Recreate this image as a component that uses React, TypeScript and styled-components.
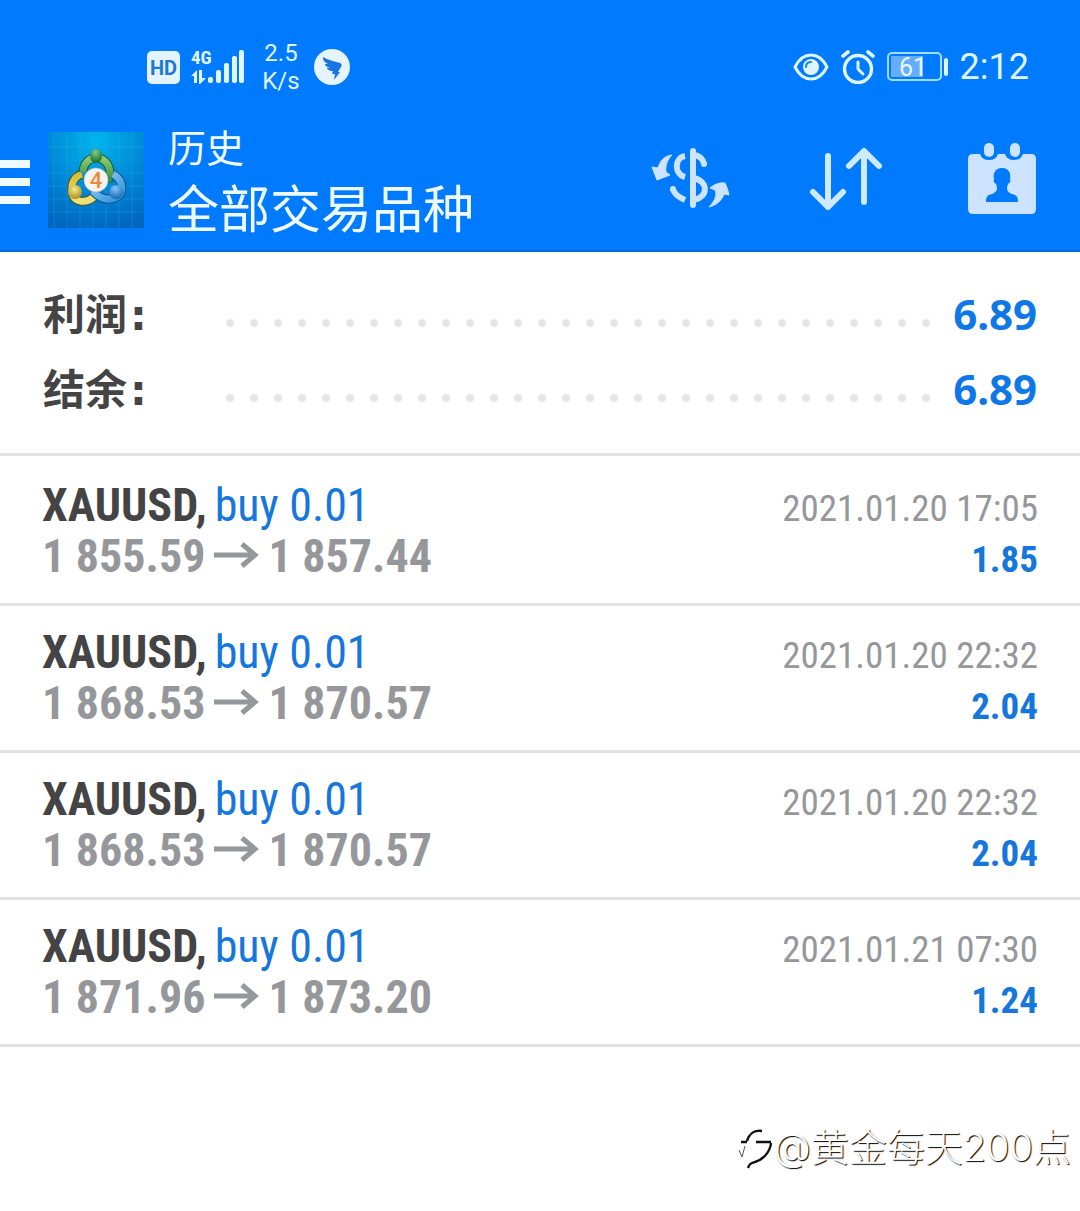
import React from "react";
import styled, { createGlobalStyle } from "styled-components";

const GlobalStyle = createGlobalStyle`
  *, *::before, *::after { box-sizing: border-box; }
  body {
    margin: 0;
    background: #ffffff;
    font-family: Roboto, "Noto Sans CJK SC", sans-serif;
  }
`;

const condensed = `"Roboto Condensed", "Noto Sans CJK SC", sans-serif`;
const ice = "#dff5ff";

const Screen = styled.div`
  min-height: 100vh;
  display: flex;
  flex-direction: column;
`;

const Header = styled.header`
  background: #007aff;
  border-bottom: 2px solid #0b6bd6;
`;

const StatusBar = styled.div`
  display: flex;
  align-items: center;
  justify-content: space-between;
  padding: 38px 51px 0 147px;
  height: 96px;
  color: ${ice};
`;

const StatusGroup = styled.div<{ $gap: number }>`
  display: flex;
  align-items: center;
  gap: ${(p) => p.$gap}px;
  svg { display: block; }
`;

const Speed = styled.div`
  width: 38px;
  margin: 0 3px 0 6px;
  font-size: 24px;
  line-height: 28px;
  text-align: center;
`;

const Clock = styled.time`
  font-size: 36px;
  line-height: 44px;
`;

const Toolbar = styled.div`
  display: flex;
  align-items: center;
  height: 154px;
  padding: 14px 43px 0 0;
`;

const IconButton = styled.button`
  display: block;
  padding: 0;
  border: 0;
  background: none;
  cursor: pointer;
  svg { display: block; }
`;

const AppLogo = styled.svg`
  display: block;
  flex: none;
  margin: 0 24px 0 18px;
`;

const Titles = styled.div`
  flex: 1;
  padding-bottom: 3px;
  color: #effaff;
  font-family: "Noto Sans CJK SC", sans-serif;
  font-weight: 400;
`;

const Caption = styled.div`
  font-size: 38px;
  line-height: 54px;
`;

const Title = styled.h1`
  margin: 0;
  font-size: 51px;
  font-weight: 400;
  line-height: 66px;
`;

const Actions = styled.div`
  display: flex;
  align-items: center;
  gap: 78px;
`;

const Summary = styled.dl`
  margin: 0;
  padding: 24px 43px 27px;
  border-bottom: 3px solid #e3e3e3;
`;

const SummaryRow = styled.div`
  display: flex;
  align-items: center;
  height: 75px;
`;

const SummaryLabel = styled.dt`
  display: flex;
  align-items: baseline;
  gap: 3px;
  width: 175px;
  color: #444444;
  font: 700 42px/60px "Noto Sans CJK SC", sans-serif;
`;

const Colon = styled.span`
  font-family: "DejaVu Sans", sans-serif;
`;

const Leader = styled.div`
  flex: 1;
  height: 24px;
  margin: 18px 12px 0 0;
  background: radial-gradient(circle, #e4e4e4 3px, transparent 5px) 0 0 / 24px 24px;
`;

const SummaryValue = styled.dd`
  margin: 0;
  color: #0f78e8;
  font: 700 42px/60px "Noto Sans", sans-serif;
`;

const Deals = styled.ul`
  flex: 1;
  margin: 0;
  padding: 3px 0 0;
  list-style: none;
`;

const Deal = styled.li`
  height: 147px;
  padding: 21px 42px 0;
  border-bottom: 3px solid #e3e3e3;
  font-family: ${condensed};
`;

const DealLine = styled.div`
  display: flex;
  align-items: baseline;
  justify-content: space-between;
  height: 51px;
  line-height: 51px;
  white-space: nowrap;
`;

const Instrument = styled.span`
  display: flex;
  align-items: baseline;
  gap: 8px;
`;

const Symbol = styled.strong`
  color: #444444;
  font-size: 46px;
  font-weight: 700;
`;

const Side = styled.span`
  color: #1577dc;
  font-size: 46px;
  font-weight: 400;
`;

const Prices = styled.span`
  color: #96979b;
  font-size: 46px;
  font-weight: 700;
`;

const Arrow = styled.svg`
  margin: 0 9px;
`;

const Time = styled.time`
  color: #96979b;
  font-size: 37px;
`;

const Profit = styled.span`
  color: #1577dc;
  font-size: 37px;
  font-weight: 700;
`;

const Watermark = styled.footer`
  display: flex;
  align-items: center;
  justify-content: flex-end;
  padding: 0 9px 36px 0;
  color: #ffffff;
  font: 300 38px/56px Inter, "Noto Sans CJK SC", sans-serif;
  text-shadow: 1px 1px 1px #000000;
`;

const deals = [
  { open: "1 855.59", close: "1 857.44", time: "2021.01.20 17:05", profit: "1.85" },
  { open: "1 868.53", close: "1 870.57", time: "2021.01.20 22:32", profit: "2.04" },
  { open: "1 868.53", close: "1 870.57", time: "2021.01.20 22:32", profit: "2.04" },
  { open: "1 871.96", close: "1 873.20", time: "2021.01.21 07:30", profit: "1.24" },
];

const totals = [
  { label: "利润", value: "6.89" },
  { label: "结余", value: "6.89" },
];

const HdIcon = () => (
  <svg width="33" height="33" viewBox="0 0 33 33">
    <rect width="33" height="33" rx="5" fill="#e3f3ff" />
    <text x="16.5" y="24" textAnchor="middle" fontFamily="Roboto, sans-serif" fontWeight="700" fontSize="20" fill="#1d78d8">HD</text>
  </svg>
);

const SignalIcon = () => (
  <svg width="54" height="48" viewBox="0 -6 54 48" fill={ice}>
    <text x="0" y="15" fontFamily={condensed} fontWeight="700" fontSize="19">4G</text>
    <path d="M0 27 6 21V34H3V27ZM8 21H11V29H15L9 35H8Z" />
    <rect x="17" y="28" width="5" height="6" rx="2" />
    <rect x="25" y="21" width="5" height="13" rx="2" />
    <rect x="33" y="14" width="5" height="20" rx="2" />
    <rect x="41" y="7" width="5" height="27" rx="2" />
    <rect x="48" y="1" width="5" height="33" rx="2" />
  </svg>
);

const WingIcon = () => (
  <svg width="36" height="36" viewBox="0 0 36 36">
    <circle cx="18" cy="18" r="18" fill="#e6f4ff" />
    <path d="M9 8C14 11 20 12 26 14C28 15 28 16 27 18L24 23H26L20 31L21 25H18L19 22C15 22 13 20 13 19L16 19C12 18 11 16 11 15L14 15C10 13 9 11 9 8Z" fill="#1674e4" />
  </svg>
);

const EyeIcon = () => (
  <svg width="36" height="28" viewBox="0 0 36 28" fill="none">
    <path d="M2 14C10-2 26-2 34 14C26 30 10 30 2 14Z" stroke={ice} strokeWidth="3" strokeLinejoin="round" />
    <circle cx="18" cy="14" r="8" fill={ice} />
    <path d="M13 14C13 11 15 9 18 9" stroke="#1584f5" strokeWidth="2" strokeLinecap="round" />
  </svg>
);

const AlarmIcon = () => (
  <svg width="34" height="34" viewBox="0 0 34 34" fill="none" stroke={ice} strokeLinecap="round">
    <circle cx="17" cy="19" r="13.5" strokeWidth="3.4" />
    <path d="M17 12V19L22 24" strokeWidth="3" strokeLinejoin="round" />
    <path d="M2 6 7 2M27 2 32 6" strokeWidth="3.6" />
  </svg>
);

const BatteryIcon = () => (
  <svg width="61" height="30" viewBox="0 0 61 30">
    <rect x="1" y="1" width="53" height="27" rx="4" fill="none" stroke="#9fdcff" strokeWidth="2" />
    <rect x="4" y="4" width="32" height="21" fill="#66adff" />
    <rect x="57" y="6" width="4" height="18" rx="2" fill={ice} />
    <text x="26" y="24" textAnchor="middle" fontFamily="Roboto, sans-serif" fontSize="25" fill="#e6f7ff">61</text>
  </svg>
);

const Logo = () => (
  <AppLogo width="96" height="96" viewBox="0 0 96 96" role="img" aria-label="MetaTrader 4">
    <defs>
      <radialGradient id="sky" cx="50%" cy="8%" r="95%">
        <stop offset="0" stopColor="#00b5ec" />
        <stop offset="0.5" stopColor="#008bd8" />
        <stop offset="1" stopColor="#0066c0" />
      </radialGradient>
      <linearGradient id="green" x1="0" y1="0" x2="0" y2="1">
        <stop offset="0" stopColor="#8fcb74" /><stop offset="1" stopColor="#2c8a3c" />
      </linearGradient>
      <linearGradient id="gold" x1="0" y1="0" x2="0" y2="1">
        <stop offset="0" stopColor="#d3bd35" /><stop offset="1" stopColor="#efe07a" />
      </linearGradient>
      <linearGradient id="blue" x1="0" y1="0" x2="1" y2="1">
        <stop offset="0" stopColor="#95d5fa" /><stop offset="1" stopColor="#2f8fd8" />
      </linearGradient>
      <radialGradient id="greenBall" cx="45%" cy="25%" r="75%"><stop offset="0" stopColor="#86c97c" /><stop offset="1" stopColor="#0f7030" /></radialGradient>
      <radialGradient id="goldBall" cx="45%" cy="30%" r="75%"><stop offset="0" stopColor="#f6e98c" /><stop offset="1" stopColor="#a5860f" /></radialGradient>
      <radialGradient id="blueBall" cx="45%" cy="25%" r="75%"><stop offset="0" stopColor="#84c8f6" /><stop offset="1" stopColor="#1467b4" /></radialGradient>
    </defs>
    <rect width="96" height="96" fill="url(#sky)" />
    <path d="M6 0V96M19 0V96M32 0V96M45 0V96M58 0V96M71 0V96M84 0V96M0 15H96M0 28H96M0 41H96M0 54H96M0 67H96M0 80H96" stroke="#4cc4ef" strokeOpacity="0.2" />
    <path d="M34 42C25 45 22 53 25 64C30 72 40 70 46 65" fill="none" stroke="#3e5a2c" strokeWidth="9" />
    <path d="M34 42C25 45 22 53 25 64C30 72 40 70 46 65" fill="none" stroke="url(#gold)" strokeWidth="7" />
    <path d="M35 40C36 21 61 21 62 41L60 50" fill="none" stroke="#175d35" strokeWidth="9" />
    <path d="M35 40C36 21 61 21 62 41L60 50" fill="none" stroke="url(#green)" strokeWidth="7" />
    <path d="M65 42C76 48 77 63 67 66C58 69 51 66 45 59" fill="none" stroke="#135389" strokeWidth="9" />
    <path d="M65 42C76 48 77 63 67 66C58 69 51 66 45 59" fill="none" stroke="url(#blue)" strokeWidth="7" />
    <ellipse cx="48" cy="24" rx="6" ry="7" fill="url(#greenBall)" />
    <circle cx="27" cy="60" r="7" fill="url(#goldBall)" />
    <circle cx="68" cy="60" r="7" fill="url(#blueBall)" />
    <circle cx="48" cy="48" r="12" fill="#f5f3ef" stroke="#b9b6ad" strokeWidth="0.6" />
    <text x="48" y="56" textAnchor="middle" fontFamily="Roboto, sans-serif" fontWeight="500" fontSize="22" fill="#f08a38">4</text>
  </AppLogo>
);

const CurrencyIcon = () => (
  <svg width="80" height="66" viewBox="0 1 80 66" fill="none" stroke="#cce4ff">
    <path d="M42 5V59" strokeWidth="6" strokeLinecap="round" />
    <path d="M34 10C23 12 23 28 34 31M22 43C23 48 27 51 34 54M42 9C48 9 52 13 53 18M43 32C58 36 57 51 43 54" strokeWidth="6" />
    <circle cx="22" cy="43" r="3" fill="#cce4ff" stroke="none" />
    <circle cx="53" cy="18" r="3" fill="#cce4ff" stroke="none" />
    <path d="M21 9C13 10 9 15 7 22L1 21L6 34L19 29L15 26C14 19 17 13 21 9ZM58 61C65 54 66 48 64 44L59 42Q66 36 74 37Q77 43 78 49L73 48C71 54 66 59 58 61Z" fill="#cce4ff" strokeWidth="1" strokeLinejoin="round" />
  </svg>
);

const SortIcon = () => (
  <svg width="74" height="66" viewBox="0 0 74 66" fill="none" stroke="#cfeaff" strokeWidth="6" strokeLinecap="round" strokeLinejoin="round">
    <path d="M19 9V60M4 45 19 60 34 45M55 55V5M40 19 55 4 70 19" />
  </svg>
);

const CalendarIcon = () => (
  <svg width="76" height="74" viewBox="-6 0 76 74">
    <path d="M6 11H13Q15 17 22 17Q29 17 31 11H38Q40 17 47 17Q54 17 56 11H64Q69 11 69 16V66Q69 71 64 71H6Q1 71 1 66V16Q1 11 6 11Z" fill="#cce4ff" />
    <rect x="17" y="0" width="10" height="14" rx="5" fill="#cce4ff" />
    <rect x="43" y="0" width="10" height="14" rx="5" fill="#cce4ff" />
    <path d="M35 25C27 25 26 32 27 36C26 38 27 40 29 41C31 46 30 49 25 51C20 52 19 54 19 59H51C51 54 50 52 45 51C40 49 39 46 41 41C43 40 44 38 43 36C44 32 43 25 35 25Z" fill="#007aff" />
  </svg>
);

const BrandMark = () => (
  <svg width="36" height="46" viewBox="0 0 36 46" fill="none" aria-hidden="true">
    <path d="M9 17C12 8 17 6 24 7M3 18H9M18 18H33M33 19C32 29 24 36 17 38C12 39 11 41 10 44" stroke="#111111" strokeWidth="2.4" />
    <path d="M1 26 4 33 7 22" stroke="#555555" />
  </svg>
);

export default function App() {
  return (
    <Screen>
      <GlobalStyle />
      <Header>
        <StatusBar>
          <StatusGroup $gap={11}>
            <HdIcon />
            <SignalIcon />
            <Speed>2.5<br />K/s</Speed>
            <WingIcon />
          </StatusGroup>
          <StatusGroup $gap={12}>
            <EyeIcon />
            <AlarmIcon />
            <BatteryIcon />
            <Clock>2:12</Clock>
          </StatusGroup>
        </StatusBar>
        <Toolbar>
          <IconButton type="button" aria-label="菜单">
            <svg width="30" height="48" viewBox="0 0 30 48" fill="#effaff">
              <path d="M0 4H30V12H0ZM0 22H30V30H0ZM0 40H30V48H0Z" />
            </svg>
          </IconButton>
          <Logo />
          <Titles>
            <Caption>历史</Caption>
            <Title>全部交易品种</Title>
          </Titles>
          <Actions>
            <IconButton type="button" aria-label="交易品种"><CurrencyIcon /></IconButton>
            <IconButton type="button" aria-label="排序"><SortIcon /></IconButton>
            <IconButton type="button" aria-label="日期"><CalendarIcon /></IconButton>
          </Actions>
        </Toolbar>
      </Header>
      <Summary>
        {totals.map((t) => (
          <SummaryRow key={t.label}>
            <SummaryLabel>{t.label}<Colon>:</Colon></SummaryLabel>
            <Leader />
            <SummaryValue>{t.value}</SummaryValue>
          </SummaryRow>
        ))}
      </Summary>
      <Deals>
        {deals.map((d, i) => (
          <Deal key={i}>
            <DealLine>
              <Instrument><Symbol>XAUUSD,</Symbol> <Side>buy 0.01</Side></Instrument>
              <Time>{d.time}</Time>
            </DealLine>
            <DealLine>
              <Prices>
                {d.open}
                <Arrow width="45" height="32" viewBox="0 0 45 32" fill="none" stroke="#96979b" strokeWidth="5" role="img" aria-label="→">
                  <path d="M0 15H42M28 4 41 15 28 26" />
                </Arrow>
                {d.close}
              </Prices>
              <Profit>{d.profit}</Profit>
            </DealLine>
          </Deal>
        ))}
      </Deals>
      <Watermark><BrandMark />@黄金每天200点</Watermark>
    </Screen>
  );
}
